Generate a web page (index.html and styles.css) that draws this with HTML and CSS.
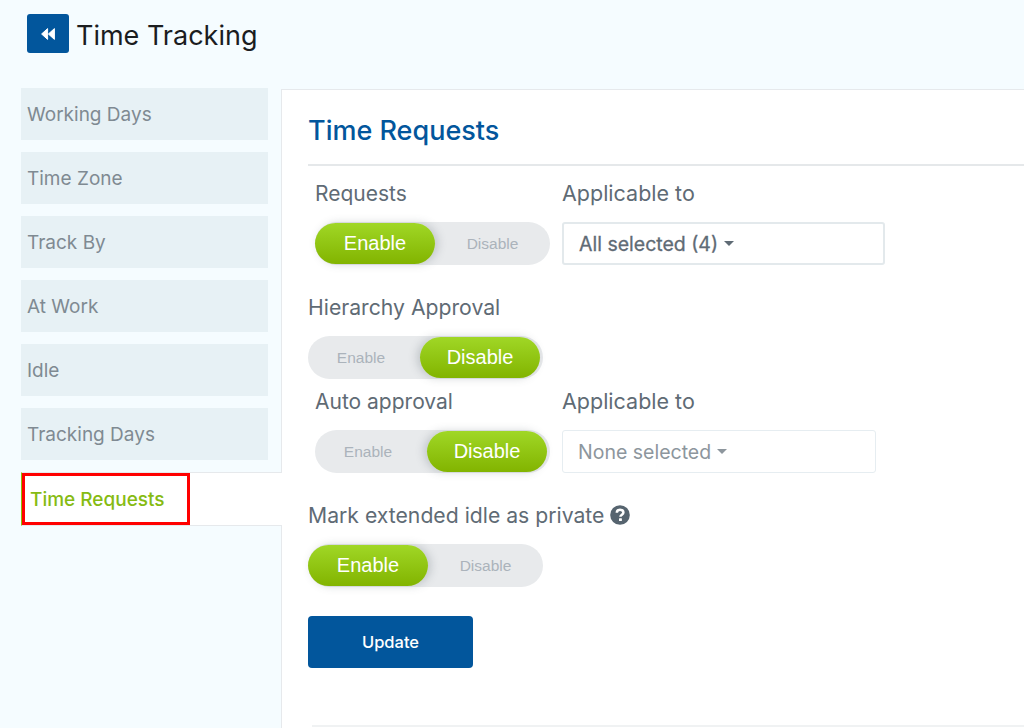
FILE: index.html
```html
<!DOCTYPE html>
<html lang="en">
<head>
    <meta charset="UTF-8">
    <title>Time Tracking</title>
    <link rel="stylesheet" href="styles.css">
</head>
<body>

<header class="top-bar">
    <button class="back-btn" type="button">
        <svg width="14" height="12" viewBox="0 0 14 12"><path d="M6.6 0.6 L0.6 6 L6.6 11.4 Z M13.4 0.6 L7.4 6 L13.4 11.4 Z" fill="#fff" stroke="#fff" stroke-linejoin="round"/></svg>
    </button>
    <h1>Time Tracking</h1>
</header>

<div class="layout">
    <nav class="side-nav">
        <a class="nav-item">Working Days</a>
        <a class="nav-item">Time Zone</a>
        <a class="nav-item">Track By</a>
        <a class="nav-item">At Work</a>
        <a class="nav-item">Idle</a>
        <a class="nav-item">Tracking Days</a>
        <div class="nav-active">
            <a class="nav-active-label">Time Requests</a>
        </div>
    </nav>

    <main class="panel">
        <h2>Time Requests</h2>

        <div class="field-row first-row">
            <div class="field">
                <label>Requests</label>
                <div class="toggle">
                    <span class="toggle-opt on">Enable</span>
                    <span class="toggle-opt">Disable</span>
                </div>
            </div>
            <div class="field">
                <label class="wide-label">Applicable to</label>
                <div class="select filled">All selected (4) <span class="caret"></span></div>
            </div>
        </div>

        <div class="field flush hierarchy">
            <label>Hierarchy Approval</label>
            <div class="toggle off">
                <span class="toggle-opt">Enable</span>
                <span class="toggle-opt on">Disable</span>
            </div>
        </div>

        <div class="field-row auto-row">
            <div class="field">
                <label>Auto approval</label>
                <div class="toggle off">
                    <span class="toggle-opt">Enable</span>
                    <span class="toggle-opt on">Disable</span>
                </div>
            </div>
            <div class="field">
                <label class="wide-label">Applicable to</label>
                <div class="select empty">None selected <span class="caret"></span></div>
            </div>
        </div>

        <div class="field flush idle-field">
            <label class="with-help">Mark extended idle as private
                <svg width="20" height="20" viewBox="0 0 20 20">
                    <circle cx="10" cy="10" r="9.8" fill="#56646f"/>
                    <path d="M6.8 7.7 C6.9 5.6 8.3 4.7 10 4.7 C12 4.7 13.4 5.8 13.4 7.5 C13.4 9.7 10.4 9.6 10.4 11.8" fill="none" stroke="#fff" stroke-width="2.5"/>
                    <rect x="9" y="13.2" width="2.9" height="2.7" rx="0.5" fill="#fff"/>
                </svg>
            </label>
            <div class="toggle">
                <span class="toggle-opt on">Enable</span>
                <span class="toggle-opt">Disable</span>
            </div>
        </div>

        <button class="update-btn" type="button">Update</button>
        <div class="bottom-line"></div>
    </main>
</div>

</body>
</html>
```

FILE: styles.css
```css
* {
    box-sizing: border-box;
}
html, body {
    height: 100%;
}
body {
    margin: 0;
    height: 728px;
    overflow: hidden;
    background: #f5fcff;
    font-family: "Inter", "Open Sans", sans-serif;
    color: #5f6b75;
}
.top-bar {
    display: flex;
    align-items: center;
    height: 88px;
    padding: 0 0 21px 27px;
}
.back-btn {
    display: flex;
    align-items: center;
    justify-content: center;
    width: 42px;
    height: 39px;
    margin-right: 7px;
    padding: 0;
    border: none;
    border-radius: 3px;
    background: #02569c;
}
h1 {
    margin: 3px 0 0;
    font-size: 27px;
    font-weight: 400;
    color: #1b1d1f;
}
.layout {
    display: flex;
    height: 640px;
}
.side-nav {
    width: 281px;
    padding-left: 21px;
}
.nav-item {
    display: flex;
    align-items: center;
    height: 52px;
    margin: 0 13px 12px 0;
    padding-left: 6px;
    background: #e7f1f5;
    color: #7f8a92;
    font-size: 19px;
}
.nav-active {
    position: relative;
    z-index: 1;
    height: 54px;
    margin-right: -1px;
    background: #fff;
    border-top: 1px solid #e6e9ec;
    border-bottom: 1px solid #e6e9ec;
    border-left: 1px solid #8cc00a;
}
.nav-active-label {
    display: flex;
    align-items: center;
    width: 168px;
    height: 52px;
    padding-left: 5px;
    border: 3px solid #f00;
    color: #86bb12;
    font-size: 19px;
    font-weight: 500;
}
.panel {
    flex: 1;
    margin-top: 1px;
    padding: 0 0 0 26px;
    background: #fff;
    border-left: 1px solid #e6e9ec;
    border-top: 1px solid #e6e9ec;
}
h2 {
    display: flex;
    align-items: center;
    height: 76px;
    margin: 0;
    padding-top: 6px;
    border-bottom: 2px solid #e5e8ea;
    color: #02569c;
    font-size: 27px;
    font-weight: 500;
}
.field-row {
    display: flex;
    gap: 12px;
    padding-left: 7px;
}
.first-row {
    margin-top: 12px;
}
.auto-row {
    margin-top: 7px;
}
.field label {
    display: block;
    height: 30px;
    margin-bottom: 14px;
    font-size: 21.2px;
    line-height: 30px;
}
.field-row .field:first-child label {
    font-size: 21px;
    line-height: 32px;
}
.field-row .field .wide-label {
    font-size: 21.5px;
}
.hierarchy {
    margin-top: 27px;
}
.idle-field {
    margin-top: 27px;
}
.field .with-help {
    display: flex;
    align-items: center;
    gap: 6px;
}
.toggle {
    display: flex;
    align-items: center;
    width: 235px;
    height: 43px;
    padding: 1px 0;
    border-radius: 22px;
    background: #e8eaec;
    font-family: "Liberation Sans", Arial, sans-serif;
}
.toggle.off {
    padding-right: 3px;
}
.toggle-opt {
    display: flex;
    align-items: center;
    justify-content: center;
    flex: 1;
    color: #abb3bb;
    font-size: 15.5px;
}
.toggle.off .toggle-opt {
    padding-right: 6px;
}
.toggle-opt.on {
    flex: none;
    width: 120px;
    height: 41px;
    border-radius: 21px;
    background: linear-gradient(#a0d726, #82b400);
    box-shadow: 3px 0 8px rgba(80, 90, 100, 0.25);
    color: #fff;
    font-size: 20px;
}
.toggle.off .toggle-opt.on {
    padding-right: 0;
    box-shadow: -3px 0 8px rgba(80, 90, 100, 0.25);
}
.select {
    display: flex;
    align-items: center;
    gap: 6px;
    height: 43px;
    padding-left: 15px;
    background: #fff;
    border-radius: 3px;
    font-size: 19.5px;
}
.select.filled {
    width: 323px;
    border: 2px solid #e3e9ec;
    color: #5f6b75;
    font-weight: 400;
    -webkit-text-stroke: 0.3px #5f6b75;
}
.select.empty {
    width: 314px;
    border: 1px solid #e6edf1;
    color: #8d969d;
}
.caret {
    border-top: 5px solid currentColor;
    border-left: 5px solid transparent;
    border-right: 5px solid transparent;
}
.update-btn {
    display: block;
    width: 165px;
    height: 52px;
    margin-top: 29px;
    border: none;
    border-radius: 4px;
    background: #02569c;
    color: #fff;
    font-family: "Inter", sans-serif;
    font-size: 16.5px;
    font-weight: 500;
}
.bottom-line {
    height: 2px;
    margin-top: 57px;
    margin-left: 4px;
    background: #f0f2f3;
}
```
